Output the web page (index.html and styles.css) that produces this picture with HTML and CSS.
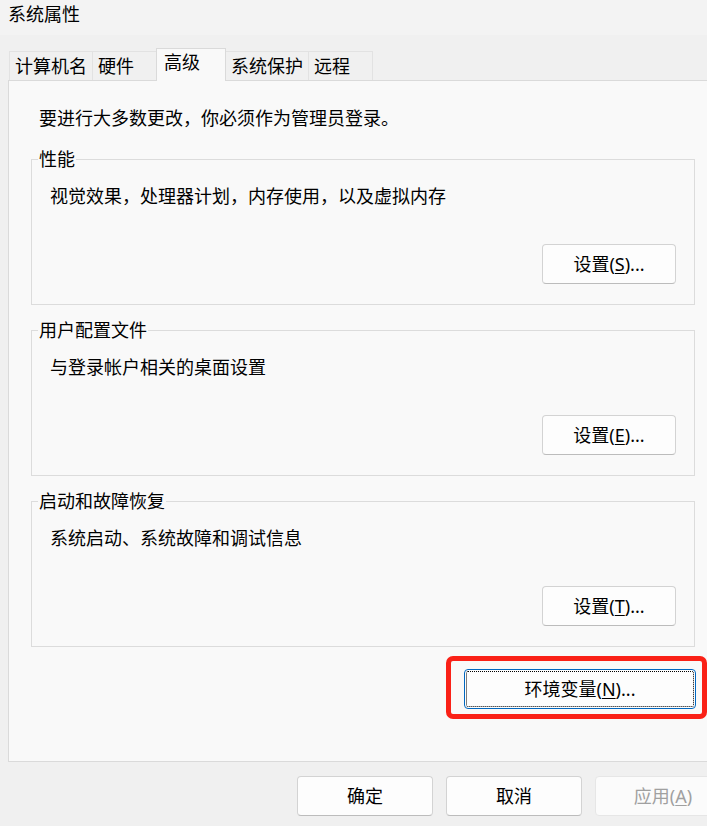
FILE: index.html
```html
<!DOCTYPE html>
<html lang="zh-CN">
<head>
<meta charset="utf-8">
<title>系统属性</title>
<link rel="stylesheet" href="styles.css">
</head>
<body>
<div class="dialog">
  <div class="titlebar">系统属性</div>
  <div class="tabs">
    <div class="tab">计算机名</div>
    <div class="tab">硬件</div>
    <div class="tab active">高级</div>
    <div class="tab">系统保护</div>
    <div class="tab">远程</div>
  </div>
  <div class="panel">
    <p class="intro">要进行大多数更改，你必须作为管理员登录。</p>
    <fieldset class="group">
      <legend>性能</legend>
      <p class="desc">视觉效果，处理器计划，内存使用，以及虚拟内存</p>
      <div class="actions"><button class="btn">设置(<u>S</u>)...</button></div>
    </fieldset>
    <fieldset class="group">
      <legend>用户配置文件</legend>
      <p class="desc">与登录帐户相关的桌面设置</p>
      <div class="actions"><button class="btn">设置(<u>E</u>)...</button></div>
    </fieldset>
    <fieldset class="group">
      <legend>启动和故障恢复</legend>
      <p class="desc">系统启动、系统故障和调试信息</p>
      <div class="actions"><button class="btn">设置(<u>T</u>)...</button></div>
    </fieldset>
    <div class="env-row">
      <div class="highlight"><button class="btn env">环境变量(<u>N</u>)...</button></div>
    </div>
  </div>
  <div class="footer">
    <button class="btn wide">确定</button>
    <button class="btn wide">取消</button>
    <button class="btn wide disabled">应用(<u>A</u>)</button>
  </div>
</div>
</body>
</html>
```
FILE: styles.css
```css
html, body {
  margin: 0;
  overflow: hidden;
}

body {
  background: #f0f0f0;
  font-family: "Noto Sans", "Noto Sans CJK SC", sans-serif;
  font-size: 18px;
  color: #000;
}

.dialog {
  width: 742px;
}

.titlebar {
  height: 35px;
  line-height: 28px;
  padding-left: 8px;
  background: #f3f3f3;
}

.tabs {
  display: flex;
  align-items: flex-end;
  height: 45px;
  padding-left: 9px;
  box-sizing: border-box;
}

.tab {
  box-sizing: border-box;
  height: 29px;
  min-width: 65px;
  padding: 0 5px 0 5px;
  border: 1px solid #e2e2e2;
  border-bottom: none;
  line-height: 28px;
  background: #f0f0f0;
  margin-left: -1px;
  white-space: nowrap;
}

.tab:first-child {
  margin-left: 0;
}

.tab.active {
  position: relative;
  z-index: 1;
  height: 33px;
  min-width: 70px;
  padding-left: 7px;
  margin-bottom: -1px;
  line-height: 27px;
  background: #f9f9f9;
  border-color: #dadada;
}

.panel {
  box-sizing: border-box;
  height: 682px;
  margin: 0 8px;
  padding: 25px 22px 0;
  border: 1px solid #dadada;
  border-right: none;
  background: #f9f9f9;
}

.intro {
  margin: 0 0 0 8px;
  line-height: 24px;
}

.group {
  box-sizing: border-box;
  width: 664px;
  min-inline-size: 0;
  margin: 15px 0 0;
  padding: 15px 18px 20px 6px;
  border: 1px solid #dcdcdc;
}

.intro + .group {
  margin-top: 19px;
}

.group legend {
  padding: 0 1px;
  line-height: 20px;
}

.desc {
  margin: 0 0 0 12px;
  line-height: 24px;
}

.actions {
  display: flex;
  justify-content: flex-end;
  margin-top: 36px;
}

.btn {
  box-sizing: border-box;
  width: 134px;
  height: 40px;
  padding: 0;
  border: 1px solid #d3d3d3;
  border-bottom-color: #bcbcbc;
  border-radius: 4px;
  background: #fdfdfd;
  font: inherit;
  line-height: 37px;
  color: #000;
}

.btn u {
  text-underline-offset: 2px;
}

.env-row {
  display: flex;
  justify-content: flex-end;
  width: 676px;
  margin-top: 9px;
}

.highlight {
  border: 5px solid #fa2117;
  border-radius: 7px;
  padding: 8px 6px 5px 13px;
}

.btn.env {
  width: 232px;
  border: 1px solid #0067c0;
  outline: 1px dotted #000;
  outline-offset: -3px;
}

.footer {
  display: flex;
  justify-content: flex-end;
  gap: 13px;
  margin-top: 14px;
  padding-right: 11px;
}

.btn.wide {
  width: 136px;
}

.btn.disabled {
  background: #fbfbfb;
  border-color: #e6e6e6;
  color: #a0a0a0;
}
```
